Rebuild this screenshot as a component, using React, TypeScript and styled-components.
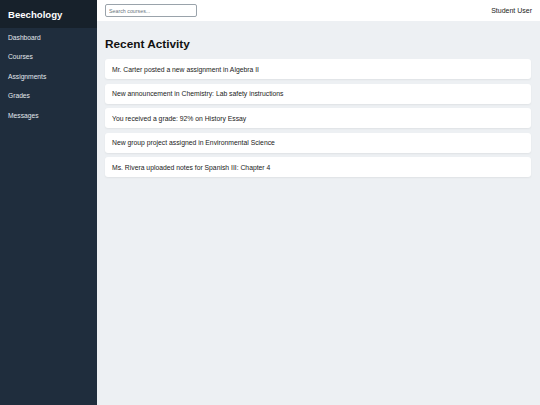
import React from 'react';
import styled, { createGlobalStyle } from 'styled-components';

const SIDEBAR_BG = '#1f2d3d';
const BRAND_BG = '#17212b';
const PAGE_BG = '#edf0f3';

const GlobalStyle = createGlobalStyle`
  html, body, #root {
    margin: 0;
    height: 100%;
  }
  body {
    font-family: "Liberation Sans", Arial, sans-serif;
    background: ${PAGE_BG};
  }
`;

const Layout = styled.div`
  display: flex;
  height: 100vh;
`;

const Sidebar = styled.aside`
  width: 97px;
  flex-shrink: 0;
  background: ${SIDEBAR_BG};
  color: #e6ebf0;
`;

const Brand = styled.div`
  height: 28px;
  display: flex;
  align-items: center;
  padding: 0 8px;
  background: ${BRAND_BG};
  color: #fff;
  font-size: 9.6px;
  font-weight: 700;
`;

const Nav = styled.nav`
  display: flex;
  flex-direction: column;
`;

const NavItem = styled.a`
  display: block;
  padding: 0 8px;
  height: 19.4px;
  line-height: 19.4px;
  font-size: 6.7px;
  color: #e3e8ed;
  text-decoration: none;
`;

const Main = styled.div`
  flex: 1;
  display: flex;
  flex-direction: column;
  min-width: 0;
`;

const Topbar = styled.header`
  height: 21px;
  background: #fff;
  display: flex;
  align-items: center;
  justify-content: space-between;
  padding: 0 8px;
`;

const Search = styled.input`
  width: 92px;
  height: 13px;
  box-sizing: border-box;
  border: 1px solid #9aa3ab;
  border-radius: 2px;
  padding: 0 3px;
  font-family: inherit;
  font-size: 5.3px;
  outline: none;
  &::placeholder {
    color: #6b7580;
  }
`;

const UserName = styled.span`
  font-size: 7px;
  color: #222;
`;

const Content = styled.main`
  padding: 16px 9px 0 8px;
`;

const Title = styled.h2`
  margin: 0 0 8px;
  font-size: 11.8px;
  line-height: 14px;
  font-weight: 700;
  color: #111;
`;

const Feed = styled.div`
  display: flex;
  flex-direction: column;
  gap: 4.6px;
`;

const Card = styled.div`
  height: 20px;
  display: flex;
  align-items: center;
  padding: 0 7px;
  background: #fff;
  border-radius: 3px;
  box-shadow: 0 1px 2px rgba(0, 0, 0, 0.06);
  font-size: 6.8px;
  color: #222;
`;

const navItems = ['Dashboard', 'Courses', 'Assignments', 'Grades', 'Messages'];

const activity = [
  'Mr. Carter posted a new assignment in Algebra II',
  'New announcement in Chemistry: Lab safety instructions',
  'You received a grade: 92% on History Essay',
  'New group project assigned in Environmental Science',
  'Ms. Rivera uploaded notes for Spanish III: Chapter 4',
];

export default function App() {
  return (
    <>
      <GlobalStyle />
      <Layout>
        <Sidebar>
          <Brand>Beechology</Brand>
          <Nav>
            {navItems.map((item) => (
              <NavItem key={item} href="#">
                {item}
              </NavItem>
            ))}
          </Nav>
        </Sidebar>
        <Main>
          <Topbar>
            <Search placeholder="Search courses..." />
            <UserName>Student User</UserName>
          </Topbar>
          <Content>
            <Title>Recent Activity</Title>
            <Feed>
              {activity.map((text) => (
                <Card key={text}>{text}</Card>
              ))}
            </Feed>
          </Content>
        </Main>
      </Layout>
    </>
  );
}
